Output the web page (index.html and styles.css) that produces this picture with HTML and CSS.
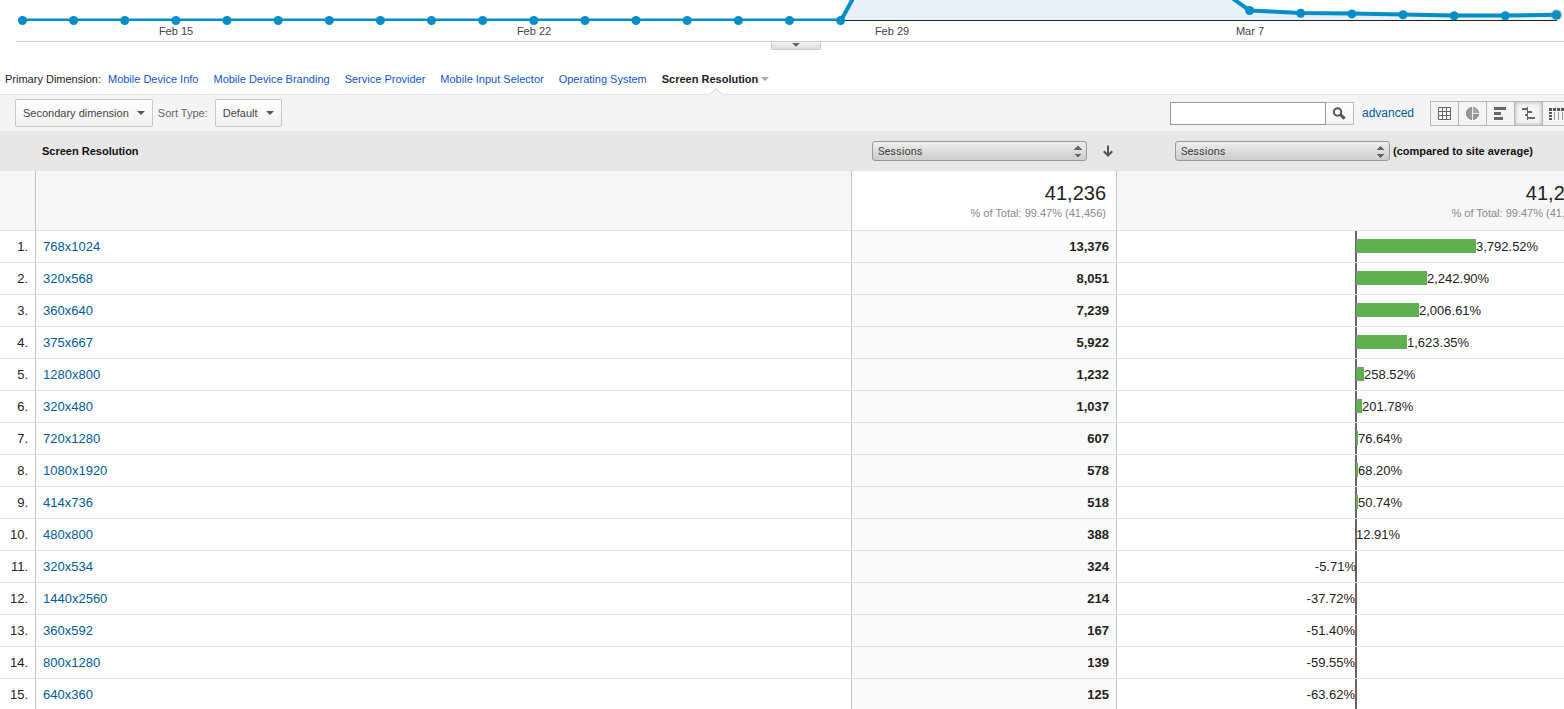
FILE: index.html
```html
<!DOCTYPE html>
<html lang="en">
<head>
<meta charset="utf-8">
<title>Mobile Devices - Screen Resolution</title>
<link rel="stylesheet" href="styles.css">
</head>
<body>
<main class="report">
  <section class="timeline" aria-label="Sessions over time">
    <svg class="chart" viewBox="0 0 1564 41" role="img" aria-label="Sessions by day">
      <defs><clipPath id="plot"><rect x="0" y="0" width="1564" height="21"/></clipPath>
      <filter id="glow" x="-50%" y="-50%" width="200%" height="200%"><feGaussianBlur stdDeviation="1"/></filter></defs>
      <path class="area" d="M841 20.500L892-73L1198.500-26L1249.600 10.500L1301 13L1352 13.600L1403 14.500L1454 15.500L1505.400 15.500L1556.500 14.800V20.500Z"/>
      <path class="baseline" d="M841 20.500H1557"/>
      <g clip-path="url(#plot)"><path class="series" d="M22.500 20.500H841L892-73M1198.500-26L1249.600 10.500L1301 13L1352 13.600L1403 14.500L1454 15.500L1505.400 15.500L1556.500 14.800"/></g>
      <circle class="halo" cx="1556.500" cy="15" r="5" filter="url(#glow)"/>
      <g class="points">
        <circle cx="22.500" cy="20.500" r="4.500"/><circle cx="73.600" cy="20.500" r="4.500"/><circle cx="124.800" cy="20.500" r="4.500"/><circle cx="175.900" cy="20.500" r="4.500"/><circle cx="227" cy="20.500" r="4.500"/><circle cx="278.200" cy="20.500" r="4.500"/><circle cx="329.300" cy="20.500" r="4.500"/><circle cx="380.400" cy="20.500" r="4.500"/><circle cx="431.500" cy="20.500" r="4.500"/><circle cx="482.700" cy="20.500" r="4.500"/><circle cx="533.800" cy="20.500" r="4.500"/><circle cx="585" cy="20.500" r="4.500"/><circle cx="636" cy="20.500" r="4.500"/><circle cx="687.200" cy="20.500" r="4.500"/><circle cx="738.400" cy="20.500" r="4.500"/><circle cx="789.500" cy="20.500" r="4.500"/><circle cx="840.600" cy="20.500" r="4.500"/>
        <circle cx="1249.600" cy="10.500" r="4.500"/><circle cx="1300.700" cy="13.300" r="4.500"/><circle cx="1351.900" cy="13.900" r="4.500"/><circle cx="1403" cy="14.700" r="4.500"/><circle cx="1454.200" cy="15.700" r="4.500"/><circle cx="1505.300" cy="15.700" r="4.500"/><circle cx="1556.500" cy="15" r="4.500"/>
      </g>
      <g class="dates"><text x="176" y="35">Feb 15</text><text x="534" y="35">Feb 22</text><text x="892" y="35">Feb 29</text><text x="1250" y="35">Mar 7</text></g>
    </svg>
    <div class="divider"><button class="handle" aria-label="Show annotations"><svg width="8" height="5" viewBox="0 0 8 5"><path d="M0 1L4 5L8 1" fill="#fff"/><path d="M0 0H8L4 4Z" fill="#666"/></svg></button></div>
  </section>

  <nav class="dimensions" aria-label="Primary dimension">
    <span class="dimensions-label">Primary Dimension:</span>
    <a href="#info">Mobile Device Info</a>
    <a href="#branding">Mobile Device Branding</a>
    <a href="#provider">Service Provider</a>
    <a href="#input">Mobile Input Selector</a>
    <a href="#os">Operating System</a>
    <button class="current">Screen Resolution<i class="caret caret-light"></i>
      <svg class="notch" width="12" height="7" viewBox="0 0 12 7"><path d="M0 6L6 0.500L12 6V7H0Z" fill="#f4f4f4"/><path d="M0.500 6L6 0.500L11.500 6" fill="none" stroke="#ccc"/></svg>
    </button>
  </nav>

  <div class="toolbar">
    <button class="menu">Secondary dimension<i class="caret"></i></button>
    <span class="sort-label">Sort Type:</span>
    <button class="menu">Default<i class="caret"></i></button>
    <form class="search">
      <input class="search-box" type="text" aria-label="Search the table">
      <button class="search-button" type="button" aria-label="Search"><svg width="14" height="13" viewBox="0 0 14 13"><circle cx="5.500" cy="5" r="3.700" fill="none" stroke="#555" stroke-width="2"/><path d="M8.300 7.500L12.700 11.700" stroke="#555" stroke-width="3"/></svg></button>
    </form>
    <a class="advanced" href="#advanced">advanced</a>
    <div class="views">
      <button class="view" aria-label="Table"><svg width="13" height="13" viewBox="0 0 13 13"><path d="M.5.500H12.500V12.500H.5ZM4.500 0V13M8.500 0V13M0 4.500H13M0 8.500H13" fill="none" stroke="#666"/></svg></button>
      <button class="view" aria-label="Percentage"><svg width="13" height="13" viewBox="0 0 13 13"><circle cx="6.500" cy="6.500" r="6" fill="#999" stroke="#777"/><path d="M7 1A5.500 5.500 0 0 1 12 6H7Z" fill="#aaa"/><path d="M6.500 0V13M7 6.500H13" stroke="#eee"/></svg></button>
      <button class="view" aria-label="Performance"><svg width="13" height="13" viewBox="0 0 13 13"><path d="M0 0H12V3H0ZM0 5H7V8H0ZM0 10H9V13H0Z" fill="#666"/></svg></button>
      <button class="view view-active" aria-label="Comparison" aria-pressed="true"><svg width="13" height="13" viewBox="0 0 13 13"><path d="M5 0H6V13H5ZM0 1H5V3H0ZM6 4H10V6H6ZM3 7H5V9H3ZM6 10H13V12H6Z" fill="#666"/></svg></button>
      <button class="view" aria-label="Pivot"><svg width="16" height="13" viewBox="0 0 16 13"><path d="M0 2.500H16" stroke="#555" stroke-width="3" stroke-dasharray="3 1"/><path d="M1.500 5V13" stroke="#555" stroke-width="3" stroke-dasharray="2 1"/><path d="M5.500 5V13M9.500 5V13M13.500 5V13" stroke="#999"/></svg></button>
    </div>
  </div>

  <table class="data">
    <colgroup><col class="col-rank"><col><col class="col-sessions"><col class="col-compare"></colgroup>
    <thead>
      <tr class="head">
        <th></th>
        <th class="head-name" scope="col">Screen Resolution</th>
        <th scope="col"><div class="metric metric-main"><select aria-label="Metric"><option>Sessions</option></select><svg width="10" height="12" viewBox="0 0 10 12"><path d="M5 0.500V10M0.800 6.300L5 10.500L9.200 6.300" fill="none" stroke="#555" stroke-width="2"/></svg></div></th>
        <th scope="col"><div class="metric metric-compare"><select aria-label="Comparison metric"><option>Sessions</option></select><span>(compared to site average)</span></div></th>
      </tr>
      <tr class="summary">
        <td class="rank"></td><td></td>
        <td class="total total-main"><strong>41,236</strong><small>% of Total: 99.47% (41,456)</small></td>
        <td class="total total-compare"><strong>41,236</strong><small>% of Total: 99.47% (41,456)</small></td>
      </tr>
    </thead>
    <tbody>
      <tr><td class="rank">1.</td><td class="name"><a href="#r1">768x1024</a></td><td class="count">13,376</td><td class="compare"><div class="above"><i class="bar" style="width:120px"></i>3,792.52%</div></td></tr>
      <tr><td class="rank">2.</td><td class="name"><a href="#r2">320x568</a></td><td class="count">8,051</td><td class="compare"><div class="above"><i class="bar" style="width:71px"></i>2,242.90%</div></td></tr>
      <tr><td class="rank">3.</td><td class="name"><a href="#r3">360x640</a></td><td class="count">7,239</td><td class="compare"><div class="above"><i class="bar" style="width:63px"></i>2,006.61%</div></td></tr>
      <tr><td class="rank">4.</td><td class="name"><a href="#r4">375x667</a></td><td class="count">5,922</td><td class="compare"><div class="above"><i class="bar" style="width:51px"></i>1,623.35%</div></td></tr>
      <tr><td class="rank">5.</td><td class="name"><a href="#r5">1280x800</a></td><td class="count">1,232</td><td class="compare"><div class="above"><i class="bar" style="width:8px"></i>258.52%</div></td></tr>
      <tr><td class="rank">6.</td><td class="name"><a href="#r6">320x480</a></td><td class="count">1,037</td><td class="compare"><div class="above"><i class="bar" style="width:6px"></i>201.78%</div></td></tr>
      <tr><td class="rank">7.</td><td class="name"><a href="#r7">720x1280</a></td><td class="count">607</td><td class="compare"><div class="above"><i class="bar" style="width:2px"></i>76.64%</div></td></tr>
      <tr><td class="rank">8.</td><td class="name"><a href="#r8">1080x1920</a></td><td class="count">578</td><td class="compare"><div class="above"><i class="bar" style="width:2px"></i>68.20%</div></td></tr>
      <tr><td class="rank">9.</td><td class="name"><a href="#r9">414x736</a></td><td class="count">518</td><td class="compare"><div class="above"><i class="bar" style="width:2px"></i>50.74%</div></td></tr>
      <tr><td class="rank">10.</td><td class="name"><a href="#r10">480x800</a></td><td class="count">388</td><td class="compare"><div class="above">12.91%</div></td></tr>
      <tr><td class="rank">11.</td><td class="name"><a href="#r11">320x534</a></td><td class="count">324</td><td class="compare"><div class="below">-5.71%</div></td></tr>
      <tr><td class="rank">12.</td><td class="name"><a href="#r12">1440x2560</a></td><td class="count">214</td><td class="compare"><div class="below">-37.72%<i class="bar" style="width:1px"></i></div></td></tr>
      <tr><td class="rank">13.</td><td class="name"><a href="#r13">360x592</a></td><td class="count">167</td><td class="compare"><div class="below">-51.40%<i class="bar" style="width:1px"></i></div></td></tr>
      <tr><td class="rank">14.</td><td class="name"><a href="#r14">800x1280</a></td><td class="count">139</td><td class="compare"><div class="below">-59.55%<i class="bar" style="width:1px"></i></div></td></tr>
      <tr><td class="rank">15.</td><td class="name"><a href="#r15">640x360</a></td><td class="count">125</td><td class="compare"><div class="below">-63.62%<i class="bar" style="width:1px"></i></div></td></tr>
    </tbody>
  </table>
</main>
</body>
</html>
```
FILE: styles.css
```css
* { box-sizing: border-box; }
html { scrollbar-width: none; }
body {
  margin: 0;
  overflow-x: hidden;
  background: #fff;
  color: #222;
  font-family: "Liberation Sans", Arial, sans-serif;
  font-size: 11px;
}
button, input, select { margin: 0; font: inherit; color: inherit; }
button { padding: 0; border: 0; background: none; }
a { text-decoration: none; }
svg { display: block; }

/* The table is slightly wider than the window, as the comparison column runs off its edge. */
.report { width: calc(100% + 31px); }

.timeline { width: calc(100% - 31px); }
.chart { width: 100%; height: auto; }
.area { fill: #e6f2f8; }
.baseline { fill: none; stroke: #222; }
.series { fill: none; stroke: #058dc7; stroke-width: 4; }
.points { fill: #058dc7; }
.halo { fill: #888; }
.dates { fill: #444; text-anchor: middle; font-size: 11px; }
.divider {
  display: flex;
  justify-content: center;
  height: 23px;
  margin-left: 16px;
  padding-left: 12px;
  border-top: 1px solid #ccc;
}
.handle {
  display: flex;
  justify-content: center;
  width: 50px;
  height: 8px;
  border: 1px solid #ccc;
  border-top: 0;
  border-radius: 0 0 2px 2px;
  background: linear-gradient(#f2f2f2, #ddd);
}
.handle svg { margin-top: 1px; }

.dimensions {
  display: flex;
  align-items: center;
  gap: 15px;
  height: 30px;
  padding-left: 5px;
}
.dimensions-label { margin-right: -8px; }
.dimensions a { color: #15c; }
.current {
  position: relative;
  display: flex;
  align-items: center;
  height: 30px;
  font-weight: bold;
}
.notch { position: absolute; left: 48px; bottom: -1px; }
.caret {
  width: 0;
  margin-left: 8px;
  border: 4px solid transparent;
  border-top-color: #555;
  border-bottom: 0;
}
.caret-light { margin-left: 3px; border-top-color: #aaa; }

.toolbar {
  display: flex;
  align-items: center;
  height: 37px;
  padding: 0 23px 0 15px;
  border-top: 1px solid #e2e2e2;
  background: #f4f4f4;
}
.menu {
  display: flex;
  align-items: center;
  height: 28px;
  padding: 0 7px;
  border: 1px solid #c8c8c8;
  border-radius: 2px;
  background: linear-gradient(#fff, #f1f1f1);
  color: #444;
}
.sort-label { margin: 0 7px 0 5px; color: #666; }
.search { display: flex; margin-left: auto; }
.search-box {
  width: 156px;
  height: 23px;
  padding: 0 4px;
  border: 1px solid #999;
  border-radius: 0;
  background: #fff;
}
.search-button {
  display: flex;
  align-items: center;
  justify-content: center;
  width: 28px;
  height: 23px;
  border: 1px solid #bbb;
  border-left: 0;
  background: linear-gradient(#fff, #f4f4f4);
}
.advanced { margin: 0 16px 0 8px; color: #005c9c; font-size: 12px; }
.views { display: flex; border: 1px solid #b8b8b8; }
.view {
  display: flex;
  align-items: center;
  justify-content: center;
  width: 28px;
  height: 23px;
  border-right: 1px solid #b8b8b8;
}
.view:last-child { border-right: 0; }
.view-active { background: #f4f4f4; box-shadow: inset 0 0 4px #aaa; }

.data {
  width: 100%;
  table-layout: fixed;
  border-collapse: separate;
  border-spacing: 0;
  font-size: 13px;
}
.data th, .data td { padding: 0; border-bottom: 1px solid #e2e2e2; }
.col-rank { width: 36px; }
.col-sessions { width: 266px; }
.col-compare { width: 478px; }
.data .head th {
  height: 40px;
  border-bottom: 0;
  background: #e7e7e7;
  color: #111;
  font-size: 11px;
  text-align: left;
}
.data .head-name { padding-left: 6px; }
.metric { display: flex; align-items: center; }
.metric-main { gap: 16px; padding-left: 21px; }
.metric-compare { gap: 3px; padding-left: 58px; }
.metric select {
  width: 215px;
  height: 20px;
  padding: 0 5px;
  appearance: none;
  border: 1px solid #999;
  border-radius: 3px;
  background:
    linear-gradient(to bottom right, transparent 50%, #666 50%) right 8px top 4px / 4px 4px no-repeat,
    linear-gradient(to bottom left, transparent 50%, #666 50%) right 4px top 4px / 4px 4px no-repeat,
    linear-gradient(to top right, transparent 50%, #666 50%) right 8px bottom 2px / 4px 4px no-repeat,
    linear-gradient(to top left, transparent 50%, #666 50%) right 4px bottom 2px / 4px 4px no-repeat,
    linear-gradient(#eee, #ccc);
  color: #444;
  font-family: Roboto, sans-serif;
  font-size: 11px;
  font-weight: normal;
}
.summary td { height: 60px; background: #f7f7f7; }
.summary .total { padding: 0 10px 0 0; text-align: right; }
.summary .total-compare { padding-right: 8px; }
.summary .total-main { background: #fff; }
.total strong { display: block; font-size: 20px; font-weight: normal; line-height: 24px; }
.total small { display: block; color: #888; font-size: 11px; line-height: 16px; }
.data .rank { padding-right: 7px; border-right: 1px solid #c4c4c4; text-align: right; }
.data .total-main, .data .count { border-right: 1px solid #c4c4c4; border-left: 1px solid #c4c4c4; }
.data tbody td { height: 32px; }
.data .name { padding-left: 7px; }
.name a { color: #005c9c; }
.data .count { padding-right: 7px; background: #fafafa; font-weight: bold; text-align: right; }
.data .compare {
  background: linear-gradient(#666, #666) center / 2px 100% no-repeat;
}
.above, .below { display: flex; align-items: flex-start; width: 50%; }
.above { margin-left: 50%; }
.below { justify-content: flex-end; }
.bar { height: 14px; background: #61af53; }
.below .bar { background: #b04a42; }
```
